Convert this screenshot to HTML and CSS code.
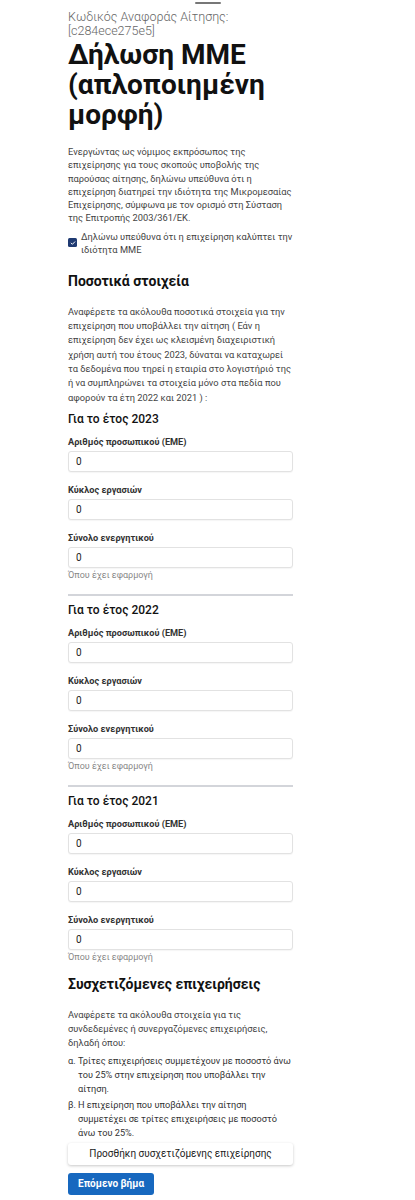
FILE: index.html
```html
<!DOCTYPE html>
<html lang="el">

<head>
    <meta charset="UTF-8">
    <meta name="viewport" content="width=device-width, initial-scale=1.0">
    <title>Δήλωση ΜΜΕ</title>
    <link rel="stylesheet" href="styles.css">
</head>

<body>
    <div class="sheet-handle"></div>

    <div class="container">
        <header>
            <p class="ref-code">Κωδικός Αναφοράς Αίτησης: [c284ece275e5]</p>
            <h1>Δήλωση ΜΜΕ (απλοποιημένη μορφή)</h1>
        </header>

        <main>
            <p class="intro">Ενεργώντας ως νόμιμος εκπρόσωπος της επιχείρησης για τους σκοπούς υποβολής της παρούσας αίτησης, δηλώνω υπεύθυνα ότι η επιχείρηση διατηρεί την ιδιότητα της Μικρομεσαίας Επιχείρησης, σύμφωνα με τον ορισμό στη Σύσταση της Επιτροπής 2003/361/ΕΚ.</p>

            <label class="check-row">
                <span class="check-box">
                    <svg viewBox="0 0 10 10" width="6" height="6"><path d="M2 5.2l2 2L8 3" fill="none" stroke="#fff" stroke-width="1.6" stroke-linecap="round" stroke-linejoin="round"/></svg>
                </span>
                <span>Δηλώνω υπεύθυνα ότι η επιχείρηση καλύπτει την ιδιότητα ΜΜΕ</span>
            </label>

            <h2>Ποσοτικά στοιχεία</h2>
            <p class="section-text">Αναφέρετε τα ακόλουθα ποσοτικά στοιχεία για την επιχείρηση που υποβάλλει την αίτηση ( Εάν η επιχείρηση δεν έχει ως κλεισμένη διαχειριστική χρήση αυτή του έτους 2023, δύναται να καταχωρεί τα δεδομένα που τηρεί η εταιρία στο λογιστήριό της ή να συμπληρώνει τα στοιχεία μόνο στα πεδία που αφορούν τα έτη 2022 και 2021 ) :</p>

            <div class="year-group">
                <h3>Για το έτος 2023</h3>
                <div class="field">
                    <label for="staff-2023">Αριθμός προσωπικού (ΕΜΕ)</label>
                    <input id="staff-2023" type="text" value="0">
                </div>
                <div class="field">
                    <label for="turnover-2023">Κύκλος εργασιών</label>
                    <input id="turnover-2023" type="text" value="0">
                </div>
                <div class="field">
                    <label for="assets-2023">Σύνολο ενεργητικού</label>
                    <input id="assets-2023" type="text" value="0">
                    <small>Όπου έχει εφαρμογή</small>
                </div>
            </div>

            <hr class="divider">

            <div class="year-group">
                <h3>Για το έτος 2022</h3>
                <div class="field">
                    <label for="staff-2022">Αριθμός προσωπικού (ΕΜΕ)</label>
                    <input id="staff-2022" type="text" value="0">
                </div>
                <div class="field">
                    <label for="turnover-2022">Κύκλος εργασιών</label>
                    <input id="turnover-2022" type="text" value="0">
                </div>
                <div class="field">
                    <label for="assets-2022">Σύνολο ενεργητικού</label>
                    <input id="assets-2022" type="text" value="0">
                    <small>Όπου έχει εφαρμογή</small>
                </div>
            </div>

            <hr class="divider">

            <div class="year-group">
                <h3>Για το έτος 2021</h3>
                <div class="field">
                    <label for="staff-2021">Αριθμός προσωπικού (ΕΜΕ)</label>
                    <input id="staff-2021" type="text" value="0">
                </div>
                <div class="field">
                    <label for="turnover-2021">Κύκλος εργασιών</label>
                    <input id="turnover-2021" type="text" value="0">
                </div>
                <div class="field">
                    <label for="assets-2021">Σύνολο ενεργητικού</label>
                    <input id="assets-2021" type="text" value="0">
                    <small>Όπου έχει εφαρμογή</small>
                </div>
            </div>

            <h2 class="related-title">Συσχετιζόμενες επιχειρήσεις</h2>
            <p class="section-text">Αναφέρετε τα ακόλουθα στοιχεία για τις συνδεδεμένες ή συνεργαζόμενες επιχειρήσεις, δηλαδή όπου:</p>
            <ol class="cases">
                <li><span class="mark">α.</span><span>Τρίτες επιχειρήσεις συμμετέχουν με ποσοστό άνω του 25% στην επιχείρηση που υποβάλλει την αίτηση.</span></li>
                <li><span class="mark">β.</span><span>Η επιχείρηση που υποβάλλει την αίτηση συμμετέχει σε τρίτες επιχειρήσεις με ποσοστό άνω του 25%.</span></li>
            </ol>

            <button class="add-button">Προσθήκη συσχετιζόμενης επιχείρησης</button>
            <button class="next-button">Επόμενο βήμα</button>
        </main>
    </div>
</body>

</html>
```

FILE: styles.css
```css
body {
    font-family: Roboto, "Noto Sans", Arial, sans-serif;
    margin: 0;
    padding: 0;
    background-color: #fff;
    color: #333;
}

/* Bottom sheet drag handle */
.sheet-handle {
    width: 26px;
    height: 2px;
    margin: 2px auto 0;
    background-color: #777;
    border-radius: 1px;
}

.container {
    width: 225px;
    padding: 0 0 2px 68px;
}

header {
    padding-top: 6px;
}

.ref-code {
    margin: 0;
    font-size: 12.5px;
    line-height: 14px;
    color: #666;
    font-weight: 300;
}

h1 {
    margin: 2px 0 0;
    font-size: 28px;
    line-height: 30px;
    font-weight: 700;
    color: #111;
}

.intro {
    margin: 15px 0 0;
    font-size: 9.3px;
    line-height: 13.3px;
    color: #444;
}

/* Checkbox row */
.check-row {
    display: flex;
    align-items: center;
    gap: 4px;
    margin-top: 5px;
    font-size: 9.3px;
    line-height: 13px;
    color: #444;
}

.check-box {
    flex: none;
    width: 9px;
    height: 9px;
    border-radius: 1.5px;
    background-color: #1f3a72;
    display: flex;
    align-items: center;
    justify-content: center;
}

h2 {
    margin: 15px 0 0;
    font-size: 14px;
    line-height: 20px;
    font-weight: 700;
    color: #111;
}

h2.related-title {
    margin-top: 11px;
}

.section-text {
    margin: 14px 0 0;
    font-size: 9.3px;
    line-height: 14.3px;
    color: #444;
}

/* Year groups */
.year-group h3 {
    margin: 7px 0 10px;
    font-size: 12px;
    line-height: 14px;
    font-weight: 500;
    color: #111;
}

.field {
    display: flex;
    flex-direction: column;
    margin-bottom: 12px;
}

.field:last-child {
    margin-bottom: 0;
}

.field label {
    font-size: 9.2px;
    line-height: 12px;
    font-weight: 700;
    color: #333;
    margin-bottom: 3px;
}

.field input {
    box-sizing: border-box;
    width: 100%;
    height: 21px;
    padding: 0 7px;
    border: 1px solid #e2e2e2;
    border-radius: 3px;
    box-shadow: 0 1px 1px rgba(0, 0, 0, 0.04);
    font-family: inherit;
    font-size: 10px;
    color: #222;
    outline: none;
}

.field small {
    margin-top: 1px;
    font-size: 9px;
    line-height: 12px;
    color: #888;
}

.divider {
    margin: 13px 0 2px;
    border: none;
    height: 2px;
    background-color: #d3d5da;
}

/* Related companies */
.cases {
    list-style: none;
    margin: 3px 0 0;
    padding: 0;
    font-size: 9.2px;
    line-height: 14px;
    color: #333;
}

.cases li {
    display: flex;
    gap: 2px;
    margin-bottom: 2px;
}

.cases .mark {
    flex: none;
    width: 8px;
}

.add-button {
    display: block;
    width: 100%;
    height: 22px;
    margin-top: 3px;
    border: none;
    border-radius: 3px;
    background-color: #fff;
    box-shadow: 0 1px 3px rgba(0, 0, 0, 0.22);
    font-family: inherit;
    font-size: 10px;
    color: #222;
    cursor: pointer;
}

.next-button {
    display: block;
    height: 22px;
    margin-top: 8px;
    padding: 0 10px;
    border: none;
    border-radius: 3px;
    background-color: #1768bf;
    font-family: inherit;
    font-size: 10px;
    font-weight: 700;
    color: #fff;
    cursor: pointer;
}
```
